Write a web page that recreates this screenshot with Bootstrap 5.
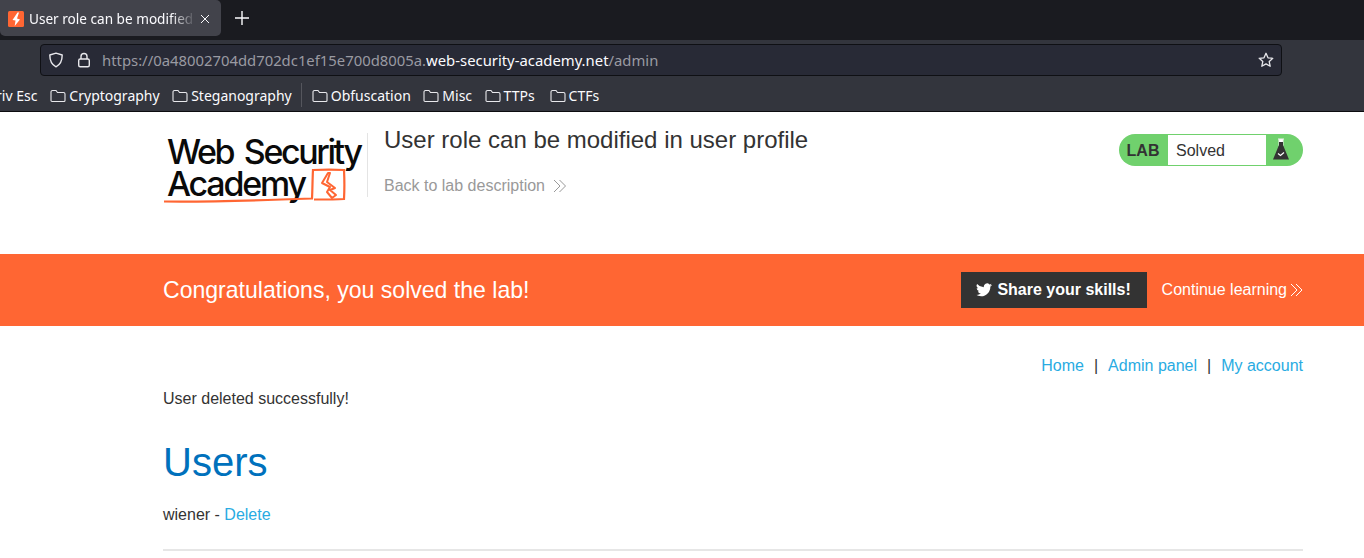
<!DOCTYPE html>
<html lang="en">
<head>
<meta charset="utf-8">
<title>User role can be modified in user profile</title>
<link rel="stylesheet" href="https://cdn.jsdelivr.net/npm/bootstrap@5.3.0/dist/css/bootstrap.min.css">
<style>
html,body{height:558px;overflow:hidden}
body{background:#fff;color:#333;font-family:"Liberation Sans",Arial,sans-serif;font-size:16px;line-height:1.5}
a{text-decoration:none}
.chrome{font-family:"Noto Sans",sans-serif;color:#fbfbfe;font-size:14px;height:112px;background:#33353d;border-bottom:1px solid #0c0c0f}
.tabstrip{height:40px;background:#1a1b20}
.tabitem{width:221px;height:36px;background:#42434b;border-radius:0 5px 5px 5px;padding:2px 8px 0;color:#fbfbfe}
.tabtitle{width:167px;white-space:nowrap;overflow:hidden;margin-left:5px;font-size:13.6px;-webkit-mask-image:linear-gradient(90deg,#000 85%,transparent);mask-image:linear-gradient(90deg,#000 85%,transparent)}
.newtab{margin-left:14px;margin-top:11px}
.urlrow{height:40px;padding:4px 82px 4px 40px}
.urlfield{height:32px;background:#282a36;border:1px solid #0f1014;border-radius:4px;padding:0 7px;color:#9a9aa2;font-size:14.85px}
.urlfield b{font-weight:400;color:#fbfbfe}
.urltext{margin-left:11px;white-space:nowrap}
.lockicon{margin-left:13px}
.bookmarks{height:31px;padding:1px 0;white-space:nowrap;overflow:hidden;color:#fbfbfe}
.bm{margin-right:12.5px}
.bm svg{margin-right:3px;flex:none}
.bmwide{margin-right:15px}
.bmsep{width:1px;height:24px;background:#55565d;margin:-1px 10px 0 -3.500px}
.privesc{margin-left:-4px;margin-right:13px}
.pagewrap{width:1140px;margin-left:163px}
.labhead{height:142px;padding-top:13px}
.logobox{width:205px;height:64px;border-right:1px solid #e4e4e4;margin-right:16px;margin-top:8px;flex:none}
.logotext{font-family:Inter,sans-serif;font-size:34px;font-weight:500;fill:#0a0a0a;word-spacing:4px}
.labtitle{font-size:24px;line-height:1.2;margin:0;padding-top:1px;color:#333;font-weight:400}
.backlink{color:#999;margin-top:19px;line-height:24px}
.backlink svg{margin-left:8px}
.labstatus{height:32px;width:184px;background:#70d16d;border-radius:16px;margin-top:9px;flex:none}
.statlab{width:49px;text-align:center;font-weight:700;padding-right:1px;padding-top:1px;line-height:32px;color:#333}
.statval{width:98px;height:30px;background:#fff;line-height:32px;padding-left:8px;color:#333}
.statflask{width:37px;padding-right:7px}
.solvedbar{height:72px;background:#f63;color:#fff}
.solvedbar .pagewrap{height:72px}
.congrats{font-size:23.05px;line-height:26px}
.sharebtn{background:#333;color:#fff;font-weight:700;height:36px;width:186px;margin-right:15px;line-height:36px}
.sharebtn svg{margin-right:5px}
.contlink{color:#fff}
.contlink svg{margin-left:3px}
.topnav{margin-top:28px;height:24px;line-height:24px;color:#333}
.topnav a,.dellink{color:#29abe2}
.navsep{margin:0 10px;display:inline-block}
.msgline{margin:9px 0 0;height:24px;line-height:24px}
.usershead{color:#0071bc;font-size:40px;font-weight:400;line-height:48px;margin:27px 0 0}
.userline{margin:17px 0 0;line-height:24px}
.hrule{height:2px;background:#e6e6e6;margin-top:22px}
</style>
</head>
<body>
<div class="chrome">
  <div class="tabstrip d-flex align-items-start">
    <div class="tabitem d-flex align-items-center">
      <svg width="16" height="16" viewBox="0 0 16 16"><rect width="16" height="16" rx="1.500" fill="#f63"/><path d="M9.500 1.500 4.500 9l3 .5-.8 5.500L12 8.500 9 7.500l2-6z" fill="#fff"/></svg>
      <span class="tabtitle">User role can be modified in user profile</span>
      <svg width="10" height="10" viewBox="0 0 10 10" class="ms-1"><path d="M1 1l8 8M9 1l-8 8" stroke="#fbfbfe" stroke-width="1"/></svg>
    </div>
    <svg class="newtab" width="14" height="14" viewBox="0 0 14 14"><path d="M7 0v14M0 7h14" stroke="#fbfbfe" stroke-width="1.400"/></svg>
  </div>
  <div class="urlrow">
    <div class="urlfield d-flex align-items-center">
      <svg width="16" height="16" viewBox="0 0 16 16"><path d="M8 1.200 14.200 3c0 6-1.500 9.500-6.200 11.800C3.300 12.500 1.800 9 1.800 3z" fill="none" stroke="#e8e8ec" stroke-width="1.400" stroke-linejoin="round"/></svg>
      <svg class="lockicon" width="14" height="16" viewBox="0 0 14 16"><rect x="1.700" y="7" width="10.600" height="7.800" rx="1.500" fill="none" stroke="#e8e8ec" stroke-width="1.400"/><path d="M4 7V4.500a3 3 0 0 1 6 0V7" fill="none" stroke="#e8e8ec" stroke-width="1.400"/></svg>
      <span class="urltext flex-grow-1">https://0a48002704dd702dc1ef15e700d8005a.<b>web-security-academy.net</b>/admin</span>
      <svg width="16" height="16" viewBox="0 0 16 16"><path d="M8 1.300 10 5.800l4.800.5-3.600 3.200 1 4.800L8 11.900l-4.200 2.400 1-4.800L1.200 6.300 6 5.800z" fill="none" stroke="#e8e8ec" stroke-width="1.300" stroke-linejoin="round"/></svg>
    </div>
  </div>
  <div class="bookmarks d-flex align-items-center">
    <span class="privesc">riv Esc</span>
    <span class="bm d-flex align-items-center"><svg width="16" height="14" viewBox="0 0 16 14"><path d="M1 3a1.500 1.500 0 0 1 1.500-1.500h3.500L7.500 3.500h6A1.500 1.500 0 0 1 15 5v6.500a1 1 0 0 1-1 1H2a1 1 0 0 1-1-1z" fill="none" stroke="#e8e8ec" stroke-width="1.100"/></svg>Cryptography</span>
    <span class="bm d-flex align-items-center"><svg width="16" height="14" viewBox="0 0 16 14"><path d="M1 3a1.500 1.500 0 0 1 1.500-1.500h3.500L7.500 3.500h6A1.500 1.500 0 0 1 15 5v6.500a1 1 0 0 1-1 1H2a1 1 0 0 1-1-1z" fill="none" stroke="#e8e8ec" stroke-width="1.100"/></svg>Steganography</span>
    <span class="bmsep"></span>
    <span class="bm d-flex align-items-center"><svg width="16" height="14" viewBox="0 0 16 14"><path d="M1 3a1.500 1.500 0 0 1 1.500-1.500h3.500L7.500 3.500h6A1.500 1.500 0 0 1 15 5v6.500a1 1 0 0 1-1 1H2a1 1 0 0 1-1-1z" fill="none" stroke="#e8e8ec" stroke-width="1.100"/></svg>Obfuscation</span>
    <span class="bm d-flex align-items-center"><svg width="16" height="14" viewBox="0 0 16 14"><path d="M1 3a1.500 1.500 0 0 1 1.500-1.500h3.500L7.500 3.500h6A1.500 1.500 0 0 1 15 5v6.500a1 1 0 0 1-1 1H2a1 1 0 0 1-1-1z" fill="none" stroke="#e8e8ec" stroke-width="1.100"/></svg>Misc</span>
    <span class="bm bmwide d-flex align-items-center"><svg width="16" height="14" viewBox="0 0 16 14"><path d="M1 3a1.500 1.500 0 0 1 1.500-1.500h3.500L7.500 3.500h6A1.500 1.500 0 0 1 15 5v6.500a1 1 0 0 1-1 1H2a1 1 0 0 1-1-1z" fill="none" stroke="#e8e8ec" stroke-width="1.100"/></svg>TTPs</span>
    <span class="bm d-flex align-items-center"><svg width="16" height="14" viewBox="0 0 16 14"><path d="M1 3a1.500 1.500 0 0 1 1.500-1.500h3.500L7.500 3.500h6A1.500 1.500 0 0 1 15 5v6.500a1 1 0 0 1-1 1H2a1 1 0 0 1-1-1z" fill="none" stroke="#e8e8ec" stroke-width="1.100"/></svg>CTFs</span>
  </div>
</div>

<header class="pagewrap labhead d-flex align-items-start">
  <div class="logobox">
    <svg width="204" height="72" viewBox="0 0 204 72">
      <text class="logotext" x="4" y="31" textLength="196" lengthAdjust="spacing">Web Security</text>
      <text class="logotext" x="4" y="63" textLength="140" lengthAdjust="spacing">Academy</text>
      <path d="M1 68.500c40 .5 95-1 148-3 .5-10 .5-20 1-28.500 10-.5 22-.5 31 0 .5 10 .5 20 0 29-8 .5-18 .5-30 .5" fill="none" stroke="#f63" stroke-width="2.200"/>
      <path d="M165 40 159 50 167 54 164 59 169 65 173 62 167 57 172 55 164 49 167 40z" fill="none" stroke="#f63" stroke-width="2" stroke-linejoin="round"/>
    </svg>
  </div>
  <div class="flex-grow-1">
    <h2 class="labtitle">User role can be modified in user profile</h2>
    <div class="backlink d-flex align-items-center">Back to lab description
      <svg width="14" height="14" viewBox="0 0 14 14"><path d="M1 1l6 6-6 6M6.500 1l6 6-6 6" fill="none" stroke="#999" stroke-width="1"/></svg>
    </div>
  </div>
  <div class="labstatus d-flex align-items-center">
    <div class="statlab">LAB</div>
    <div class="statval">Solved</div>
    <div class="statflask d-flex justify-content-center">
      <svg width="16" height="24" viewBox="0 0 16 24"><path d="M5 1h6M6 1v7h4V1" fill="#fff" stroke="#eee" stroke-width="1"/><path d="M6 4h4v3l6 14.500H0L6 7z" fill="#333"/><path d="M5 15.500l2.500 2L11 14.500" fill="none" stroke="#fff" stroke-width="1.200"/></svg>
    </div>
  </div>
</header>

<section class="solvedbar">
  <div class="pagewrap d-flex align-items-center">
    <div class="congrats flex-grow-1">Congratulations, you solved the lab!</div>
    <a class="sharebtn d-flex align-items-center justify-content-center" href="#">
      <svg width="16" height="14" viewBox="0 0 24 20"><path d="M24 2.400a10 10 0 0 1-2.800.8A5 5 0 0 0 23.300.5a10 10 0 0 1-3.100 1.200A4.900 4.900 0 0 0 11.800 6 14 14 0 0 1 1.700.9a4.900 4.900 0 0 0 1.500 6.600A4.900 4.900 0 0 1 1 6.900 4.900 4.900 0 0 0 4.900 11.800a5 5 0 0 1-2.200.1 4.900 4.900 0 0 0 4.600 3.400A9.900 9.900 0 0 1 0 17.300 14 14 0 0 0 7.500 19.500c9.100 0 14.300-7.700 14-14.600A10 10 0 0 0 24 2.400z" fill="#fff"/></svg>Share your skills!</a>
    <a class="contlink d-flex align-items-center" href="#">Continue learning
      <svg width="13" height="14" viewBox="0 0 13 14"><path d="M1 1l6 6-6 6M6 1l6 6-6 6" fill="none" stroke="#fff" stroke-width="1"/></svg>
    </a>
  </div>
</section>

<main class="pagewrap">
  <nav class="topnav text-end"><a href="#">Home</a><span class="navsep">|</span><a href="#">Admin panel</a><span class="navsep">|</span><a href="#">My account</a></nav>
  <p class="msgline">User deleted successfully!</p>
  <h1 class="usershead">Users</h1>
  <p class="userline">wiener - <a class="dellink" href="#">Delete</a></p>
  <div class="hrule"></div>
</main>
<script src="https://cdn.jsdelivr.net/npm/bootstrap@5.3.0/dist/js/bootstrap.bundle.min.js"></script>
</body>
</html>
